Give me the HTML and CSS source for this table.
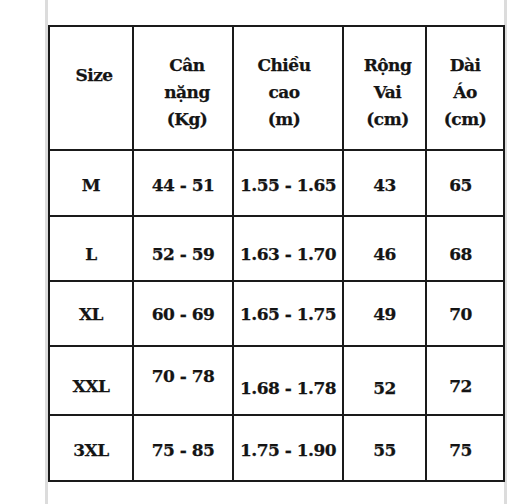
FILE: index.html
```html
<!DOCTYPE html>
<html lang="vi">
<head>
<meta charset="utf-8">
<title>Bảng size</title>
<link rel="stylesheet" href="styles.css">
</head>
<body>
<div class="sheet">
  <table class="sizes">
    <colgroup>
      <col class="c1"><col class="c2"><col class="c3"><col class="c4"><col class="c5">
    </colgroup>
    <tr class="head">
      <th class="size-h">Size</th>
      <th class="h2">Cân<br>nặng<br>(Kg)</th>
      <th class="h3">Chiều<br>cao<br>(m)</th>
      <th class="h4">Rộng<br>Vai<br>(cm)</th>
      <th class="h5">Dài<br>Áo<br>(cm)</th>
    </tr>
    <tr class="r-m">
      <td>M</td><td>44 - 51</td><td>1.55 - 1.65</td><td>43</td><td class="last">65</td>
    </tr>
    <tr class="r-l">
      <td>L</td><td>52 - 59</td><td>1.63 - 1.70</td><td>46</td><td class="last">68</td>
    </tr>
    <tr class="r-xl">
      <td>XL</td><td>60 - 69</td><td>1.65 - 1.75</td><td>49</td><td class="last">70</td>
    </tr>
    <tr class="r-xxl">
      <td>XXL</td><td class="up">70 - 78</td><td class="down">1.68 - 1.78</td><td class="down">52</td><td class="last">72</td>
    </tr>
    <tr class="r-3xl">
      <td>3XL</td><td>75 - 85</td><td>1.75 - 1.90</td><td>55</td><td class="last">75</td>
    </tr>
  </table>
</div>
</body>
</html>
```

FILE: styles.css
```css
html, body {
  margin: 0;
  padding: 0;
  background: #ffffff;
}

body {
  font-family: "DejaVu Serif", "Liberation Serif", serif;
  color: #141414;
}

.sheet {
  width: 456px;
  height: 504px;
  margin-left: 45px;
  border-left: 3px solid #dcdcdc;
  border-right: 3px solid #dcdcdc;
  padding-top: 25px;
  box-sizing: content-box;
}

.sizes {
  border-collapse: collapse;
  width: 456px;
  table-layout: fixed;
  font-weight: bold;
  font-size: 17px;
  letter-spacing: -0.5px;
  line-height: 27px;
  -webkit-text-stroke: 0.25px #141414;
}

.c1 { width: 84px; }
.c2 { width: 100px; }
.c3 { width: 110px; }
.c4 { width: 83px; }
.c5 { width: 78px; }

.sizes th,
.sizes td {
  border: 2px solid #1a1a1a;
  padding: 0;
  text-align: center;
  vertical-align: top;
  font-weight: bold;
}

.head { height: 124px; }
.head th { padding-top: 25px; }
.head .size-h { padding-top: 35px; padding-left: 6px; }
.head .h2 { padding-left: 8px; }
.head .h3 { padding-right: 8px; }
.head .h4 { padding-left: 6px; }

.r-m { height: 66px; }
.r-m td { padding-top: 21px; }

.r-l { height: 65px; }
.r-l td { padding-top: 24px; }

.r-xl { height: 65px; }
.r-xl td { padding-top: 19px; }

.r-xxl { height: 69px; }
.r-xxl td { padding-top: 26px; }
.r-xxl td.up { padding-top: 16px; }
.r-xxl td.down { padding-top: 28px; }

.r-3xl { height: 66px; }
.r-3xl td { padding-top: 21px; }

.sizes td.last { padding-right: 9px; }
```
